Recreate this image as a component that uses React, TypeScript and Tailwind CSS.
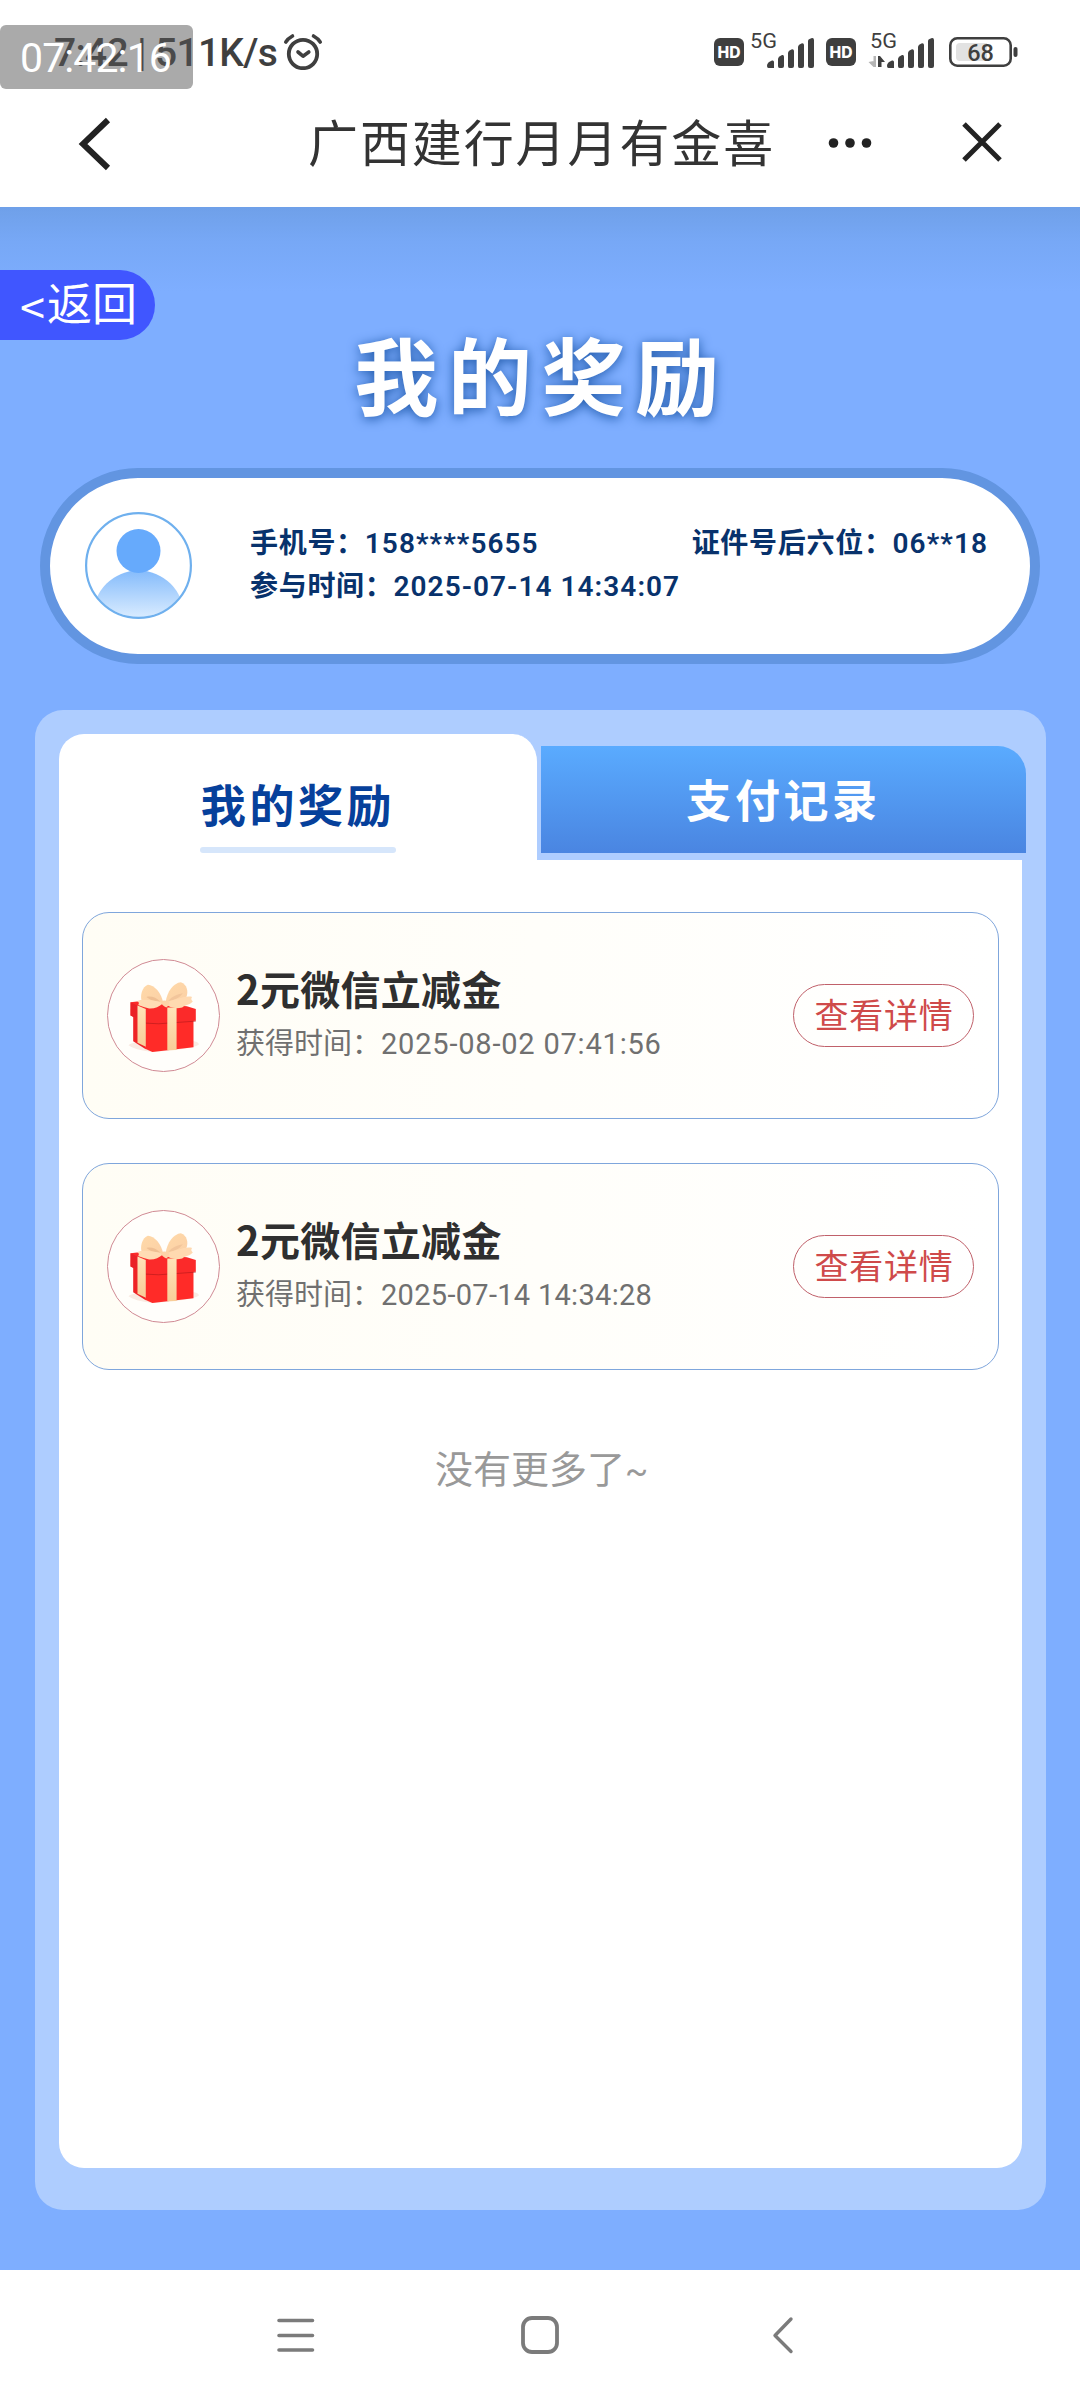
const rewards = [
  { id: 1, title: "2元微信立减金", time: "2025-08-02 07:41:56", spacing: "tracking-[0.8px]" },
  { id: 2, title: "2元微信立减金", time: "2025-07-14 14:34:28", spacing: "tracking-[0.3px]" },
];

function AlarmIcon() {
  return (
    <svg width="40" height="38" viewBox="0 0 40 38" fill="none" stroke="#3f3f3f" strokeLinecap="round">
      <circle cx="20" cy="22" r="14.2" strokeWidth="3.8" />
      <path d="M2.8 10 Q5 6.5 9.5 4" strokeWidth="3.6" />
      <path d="M37.2 10 Q35 6.5 30.5 4" strokeWidth="3.6" />
      <path d="M15 20 L20 24.2 L25.8 20" strokeWidth="3.6" strokeLinejoin="round" />
    </svg>
  );
}

function HdIcon() {
  return (
    <svg width="30" height="28" viewBox="0 0 30 28">
      <rect width="30" height="28" rx="6" fill="#3f3f3f" />
      <text
        x="15"
        y="19.8"
        fill="#fff"
        fontFamily="Inter, sans-serif"
        fontSize="16"
        fontWeight="800"
        textAnchor="middle"
        textLength="23"
        lengthAdjust="spacingAndGlyphs"
      >
        HD
      </text>
    </svg>
  );
}

function SignalIcon({ data = false }: { data?: boolean }) {
  return (
    <svg width="68" height="38" viewBox="0 0 68 38" fill="#3f3f3f">
      <text x="2" y="18" fontFamily="Roboto, sans-serif" fontSize="21" textLength="27" lengthAdjust="spacingAndGlyphs">
        5G
      </text>
      {data && (
        <>
          <path d="M5.5 26 V37 H8 V26 Z M0.5 32 L5.5 37 V31 Z" fill="#b5b5b5" />
          <path d="M10 26 H12 L17 32 H13.5 V37 H10 Z" />
        </>
      )}
      <path d="M19 36 Q19 33 22 31.5 L24 30.5 Q26 30 26 32 V38 H20.5 Q19 38 19 36 Z" />
      <path d="M30 29 Q30 27.5 31.5 26.5 L34 25 Q36 24.5 36 26.5 V36 Q36 38 34 38 H31.5 Q30 38 30 36 Z" />
      <path d="M40 23 Q40 21.5 41.5 20.5 L44 19.2 Q46 19 46 21 V36 Q46 38 44 38 H41.5 Q40 38 40 36 Z" />
      <path d="M50 17 Q50 15.5 51.5 14.5 L54 13.2 Q56 13 56 15 V36 Q56 38 54 38 H51.5 Q50 38 50 36 Z" />
      <path d="M60 11 Q60 9.5 61.5 9 L64 8 Q66 7.8 66 10 V36 Q66 38 64 38 H62 Q60 38 60 36 Z" />
    </svg>
  );
}

function BatteryIcon() {
  return (
    <svg width="69" height="30" viewBox="0 0 69 30">
      <rect x="1.3" y="1.3" width="60.4" height="27.4" rx="7" fill="none" stroke="#3f3f3f" strokeWidth="2.6" />
      <path d="M11 6 H38 V24 H11 Q7 24 7 20 V10 Q7 6 11 6 Z" fill="#e2e2e2" />
      <rect x="64.5" y="10" width="4" height="10" rx="2" fill="#3f3f3f" />
      <text
        x="31.5"
        y="24"
        fill="#3f3f3f"
        fontFamily="Roboto, sans-serif"
        fontSize="23.5"
        fontWeight="500"
        textAnchor="middle"
      >
        68
      </text>
    </svg>
  );
}

function AvatarIcon() {
  return (
    <svg className="-mt-0.5" width="107" height="107" viewBox="0 0 107 107">
      <defs>
        <linearGradient id="avatarBody" x1="0" y1="59" x2="0" y2="105" gradientUnits="userSpaceOnUse">
          <stop offset="0" stopColor="#86bcfb" />
          <stop offset="1" stopColor="#d8ebff" />
        </linearGradient>
        <clipPath id="avatarClip">
          <circle cx="53.5" cy="53.5" r="51.5" />
        </clipPath>
      </defs>
      <circle cx="53.5" cy="104" r="45.5" fill="url(#avatarBody)" clipPath="url(#avatarClip)" />
      <circle cx="53.5" cy="39" r="22" fill="#66aafc" />
      <circle cx="53.5" cy="53.5" r="52.4" fill="none" stroke="#6fb0ee" strokeWidth="2.2" />
    </svg>
  );
}

function GiftIcon() {
  return (
    <svg width="112" height="112" viewBox="52 58 335 335">
      <defs>
        <linearGradient id="ribbon" x1="0" y1="0" x2="0" y2="1">
          <stop offset="0" stopColor="#ffe3b8" />
          <stop offset="1" stopColor="#f8cd98" />
        </linearGradient>
        <linearGradient id="bow" x1="0" y1="0" x2="1" y2="1">
          <stop offset="0" stopColor="#ffd9a8" />
          <stop offset="1" stopColor="#fbd0a6" />
        </linearGradient>
      </defs>
      <path d="M114 314 Q120 305 140 306 L300 300 Q328 302 326 312 Q300 326 186 334 Q130 328 114 314 Z" fill="#f9ebe3" />
      <path d="M128 226 L166 240 L166 326 L128 302 Z" fill="#ee2426" />
      <path d="M164 240 L310 232 L310 320 L186 334 L164 324 Z" fill="#ff2b28" />
      <path d="M120 184 L140 182 L290 196 L317 204 L317 240 L205 248 L165 246 L120 224 Z" fill="#fb2a2a" />
      <path d="M120 184 L165 206 L165 246 L120 224 Z" fill="#ea2227" />
      <path d="M165 247 L205 249 L317 241" fill="none" stroke="#b81a1c" strokeWidth="2" />
      <path d="M141 194 L166 204 L166 318 L141 306 Z" fill="url(#ribbon)" />
      <path d="M231 200 L259 200 L259 328 L231 329 Z" fill="url(#ribbon)" />
      <path d="M218 184 C214 156 190 130 172 131 C154 138 148 166 154 180 C172 194 200 192 218 184 Z" fill="url(#bow)" />
      <path d="M226 184 C230 152 250 126 272 124 C290 130 296 152 288 170 C274 184 248 192 226 184 Z" fill="url(#bow)" />
      <path d="M210 182 C198 170 182 164 168 168 C180 177 194 183 210 182 Z" fill="#efbf93" />
      <path d="M234 180 C246 166 260 160 278 157 C270 168 254 179 234 180 Z" fill="#f2c59b" />
      <path d="M212 184 C188 176 152 174 141 180 Q148 186 143 192 Q160 198 176 203 C192 204 206 198 218 188 Z" fill="#ffdcb4" />
      <path d="M224 184 C246 182 282 162 306 168 Q300 174 308 182 C300 192 286 192 276 200 C256 204 240 202 222 188 Z" fill="#ffd9b0" />
      <path d="M210 182 Q222 175 236 182 Q238 194 228 200 Q216 196 210 182 Z" fill="#fdd3a8" />
    </svg>
  );
}

function StatusBar() {
  return (
    <div className="relative h-20 text-[#3f3f3f]">
      <div className="flex h-full items-start pl-[54px] pt-[32px]">
        <span className="w-[229px] whitespace-nowrap text-[39px] font-medium leading-[42px] tracking-[-0.7px]">
          7:42 | 511K/s
        </span>
        <AlarmIcon />
        <div className="ml-[391px] flex items-start">
          <div className="mt-1.5">
            <HdIcon />
          </div>
          <div className="ml-[4px] -mt-0.5">
            <SignalIcon />
          </div>
          <div className="ml-[10px] mt-1.5">
            <HdIcon />
          </div>
          <div className="ml-[12px] -mt-0.5">
            <SignalIcon data />
          </div>
          <div className="ml-[13px] mt-[5px]">
            <BatteryIcon />
          </div>
        </div>
      </div>
      {/* Clock overlay */}
      <div className="absolute left-0 top-[25px] flex h-16 w-[193px] items-center rounded-md bg-[#555]/50 pl-[20px]">
        <span className="whitespace-nowrap pt-0.5 text-[41px] leading-none tracking-[-0.9px] text-white">07:42:16</span>
      </div>
    </div>
  );
}

function TitleBar() {
  return (
    <div className="flex h-[127px] items-start pl-[78px] pt-[36px]">
      <svg className="mt-px" width="34" height="54" viewBox="0 0 34 54" fill="none" stroke="#222" strokeWidth="6">
        <path d="M30 3 L5 27 L30 51" />
      </svg>
      <h1 className="ml-[196px] w-[480px] whitespace-nowrap pt-0.5 text-[50px] leading-[54px] tracking-[1.9px] text-[#333]">
        广西建行月月有金喜
      </h1>
      <svg className="ml-[40px] mt-[22px]" width="44" height="10" viewBox="0 0 44 10" fill="#222">
        <circle cx="5.5" cy="5" r="4.8" />
        <circle cx="22" cy="5" r="4.8" />
        <circle cx="38.5" cy="5" r="4.8" />
      </svg>
      <svg className="ml-[89px] mt-[5px]" width="42" height="42" viewBox="0 0 42 42" fill="none" stroke="#222" strokeWidth="5">
        <path d="M3 3 L39 39 M39 3 L3 39" />
      </svg>
    </div>
  );
}

function InfoField({ label, value }: { label: string; value: string }) {
  return (
    <span>
      <span className="tracking-[0.7px]">{label}：</span>
      <span className="tracking-[1.05px]">{value}</span>
    </span>
  );
}

function UserCard() {
  return (
    <div className="mx-10 flex h-[196px] items-center rounded-full border-[10px] border-[#6295e1] bg-white pl-[35px] pr-[42px]">
      <AvatarIcon />
      <div className="-mt-0.5 ml-[58px] flex-1 whitespace-nowrap text-[28px] font-semibold leading-[43px] text-[#08326c]">
        <div className="flex justify-between">
          <InfoField label="手机号" value="158****5655" />
          <InfoField label="证件号后六位" value="06**18" />
        </div>
        <div>
          <InfoField label="参与时间" value="2025-07-14 14:34:07" />
        </div>
      </div>
    </div>
  );
}

function Tabs() {
  return (
    <div className="flex h-[126px]">
      <div className="flex w-[482px] flex-col items-center rounded-tl-[25px] rounded-tr-[28px] border-r-4 border-[#aecdff] bg-white pt-[46px]">
        <span className="text-[45px] font-semibold leading-[56px] tracking-[3.6px] text-[#06409b]">我的奖励</span>
        <span className="mt-[11px] h-1.5 w-[196px] rounded-full bg-[#d6e6fb]" />
      </div>
      <div className="-mr-1 mt-3 flex h-[107px] flex-1 justify-center rounded-tr-[28px] bg-linear-to-b from-[#5aabff] to-[#4a85e1] pt-[29px]">
        <span className="text-[45px] font-semibold leading-[56px] tracking-[3.6px] text-white">支付记录</span>
      </div>
    </div>
  );
}

function RewardItem({ title, time, spacing }: { title: string; time: string; spacing: string }) {
  return (
    <div className="flex h-[207px] items-center rounded-[27px] border border-[#7fa6dc] bg-linear-to-r from-[#fffdf5] to-white pl-6 pr-6">
      <div className="flex size-[113px] shrink-0 items-center justify-center rounded-full border border-[#d08a94] bg-[#fffefb]">
        <GiftIcon />
      </div>
      <div className="ml-[16px] flex-1 whitespace-nowrap">
        <h3 className="font-['Noto_Sans_CJK_SC',sans-serif] text-[40px] font-bold leading-[54px] tracking-[0.3px] text-[#2f2f2f]">
          {title}
        </h3>
        <p className="pt-0.5 text-[29px] leading-[54px] text-[#707070]">
          获得时间：<span className={spacing}>{time}</span>
        </p>
      </div>
      <button className="flex h-[63px] w-[181px] items-center justify-center whitespace-nowrap rounded-full border border-[#c0606a] pl-px text-[34px] leading-none tracking-[0.7px] text-[#cf4a4a]">
        查看详情
      </button>
    </div>
  );
}

function NavBar() {
  return (
    <div className="flex h-[130px] items-center bg-white pl-[277px]">
      <svg width="38" height="38" viewBox="0 0 38 38" fill="none" stroke="#7b7b7b" strokeWidth="3.6" strokeLinecap="round">
        <path d="M2 4.5 H35.5 M2 19.5 H35.5 M2 34 H35.5" />
      </svg>
      <svg className="ml-[206px]" width="38" height="38" viewBox="0 0 38 38" fill="none" stroke="#7b7b7b" strokeWidth="3.8">
        <rect x="2" y="2" width="34" height="34" rx="9" />
      </svg>
      <svg className="ml-[213px]" width="22" height="38" viewBox="0 0 22 38" fill="none" stroke="#7b7b7b" strokeWidth="3.4" strokeLinecap="round" strokeLinejoin="round">
        <path d="M19 3 L3 19.5 L19 35.5" />
      </svg>
    </div>
  );
}

export default function App() {
  return (
    <div className="flex h-[2400px] w-[1080px] flex-col overflow-hidden bg-white font-[Roboto,'Noto_Sans_CJK_SC',sans-serif]">
      <header>
        <StatusBar />
        <TitleBar />
      </header>

      <main className="h-[2063px] bg-[#7eaeff] bg-[linear-gradient(to_bottom,#6fa0e9_0px,#77a8f6_35px,#7eaeff_85px)] pt-[63px]">
        <button className="flex h-[70px] w-[155px] items-center rounded-r-full bg-[#4056ff] pl-[18px] text-[45px] leading-none text-white">
          <span className="w-[29px] font-['Noto_Sans_CJK_SC',sans-serif]">&lt;</span>返回
        </button>
        <h2 className="-mt-[4px] mb-[42px] pl-[3px] text-center text-[84px] font-bold leading-[90px] tracking-[9.6px] text-white [text-shadow:0_2px_12px_#1d57a8]">
          我的奖励
        </h2>
        <UserCard />

        <section className="ml-[35px] mr-[34px] mt-[46px] h-[1500px] rounded-[28px] bg-[#aecdff] px-6 pt-6">
          <Tabs />
          <div className="h-[1308px] rounded-b-[25px] bg-white px-[23px] pt-[52px]">
            <div className="flex flex-col gap-[44px]">
              {rewards.map((reward) => (
                <RewardItem key={reward.id} title={reward.title} time={reward.time} spacing={reward.spacing} />
              ))}
            </div>
            <p className="mt-[73px] pl-0.5 text-center text-[38px] leading-[54px] text-[#999]">
              没有更多了<span className="text-[34px]">~</span>
            </p>
          </div>
        </section>
      </main>

      <NavBar />
    </div>
  );
}
